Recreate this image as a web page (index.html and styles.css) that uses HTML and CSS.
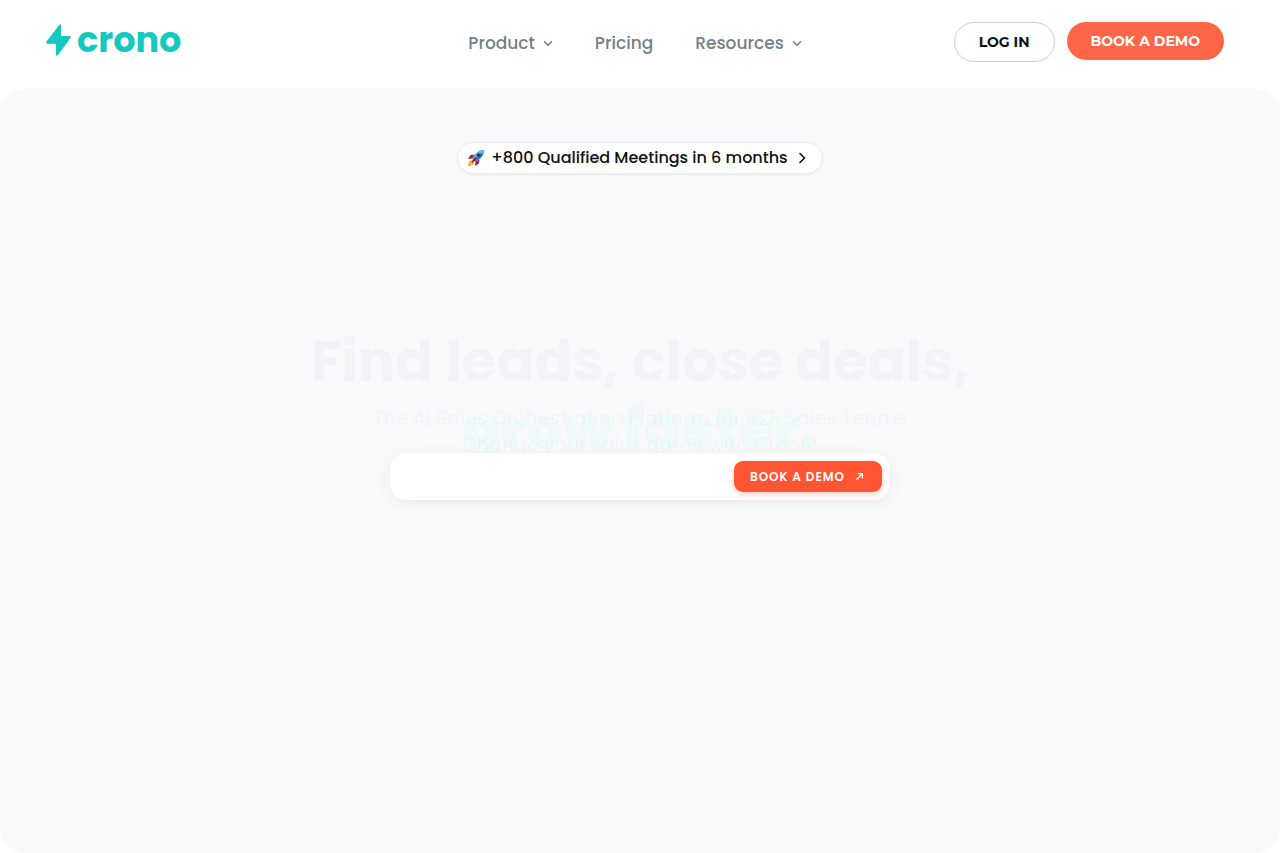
FILE: index.html
```html
<!DOCTYPE html>
<html lang="en">
<head>
    <meta charset="UTF-8">
    <meta name="viewport" content="width=device-width, initial-scale=1.0">
    <title>Crono</title>
    <link rel="stylesheet" href="styles.css">
</head>
<body>
    <header class="header">
        <a href="#" class="logo">
            <svg class="logo-bolt" viewBox="0 0 25 32" aria-hidden="true">
                <path d="M13 1.2Q14.6-.6 15 1.5V11Q15 12 16 12H23.5Q25.6 12.2 24.4 14L12.2 30.8Q10.4 32.7 9.9 30.4V20.8Q9.8 19.7 8.8 19.7H1.6Q-.7 19.4.5 17.5Z" fill="#13c8bf"/>
            </svg>
            <span>crono</span>
        </a>
        <nav class="nav">
            <button type="button" class="nav-item">Product
                <svg class="chevron" viewBox="0 0 10 10" aria-hidden="true"><path d="M1.5 3.7L5 7.2l3.5-3.5"/></svg>
            </button>
            <a href="#" class="nav-item">Pricing</a>
            <button type="button" class="nav-item">Resources
                <svg class="chevron" viewBox="0 0 10 10" aria-hidden="true"><path d="M1.5 3.7L5 7.2l3.5-3.5"/></svg>
            </button>
        </nav>
        <div class="actions">
            <a href="#" class="btn btn-outline">LOG IN</a>
            <a href="#" class="btn btn-primary">BOOK A DEMO</a>
        </div>
    </header>

    <main class="hero">
        <a href="#" class="badge">
            <svg class="rocket" viewBox="0 0 18 18" aria-hidden="true">
                <path d="M1 17c0-3 1-5 3-6l3.200 3.200C6 16.200 4 17 1 17z" fill="#fbb03b"/>
                <path d="M7.500 5.500L3.500 6 1 10l4.500-.5zM12.500 10.500L12 14.500 8 17l.5-4.500z" fill="#a3263e"/>
                <path d="M17.200.8C12.500.8 8.500 3.500 5 9.800L8.200 13c6.300-3.500 9-7.500 9-12.200z" fill="#4f9fe0"/>
                <path d="M17.200.8c0 4.700-2.700 8.700-9 12.200L6.600 11.400z" fill="#3279be"/>
                <path d="M17.200.8c-1.800 0-3.400.4-4.900 1.200l3.700 3.700c.8-1.500 1.200-3.100 1.200-4.900z" fill="#6fb7ee"/>
                <circle cx="11.700" cy="6.300" r="1.700" fill="#1d3557"/>
                <path d="M8.500 8.300l1.200 1.200-4.200 4.200-1.200-1.200z" fill="#8b1d3c"/>
            </svg>
            <span>+800 Qualified Meetings in 6 months</span>
            <svg class="badge-arrow" viewBox="0 0 12 12" aria-hidden="true"><path d="M4 1.500L8.500 6 4 10.500"/></svg>
        </a>

        <h1 class="title">Find leads, close deals,<br><span class="accent">grow faster.</span></h1>
        <p class="subtitle">The AI Sales Orchestration Platform for B2B Sales Teams<br>Change your sales game with Crono!</p>

        <form class="demo-form">
            <input type="email" class="demo-input" aria-label="Work email">
            <button type="submit" class="demo-button">BOOK A DEMO
                <svg class="demo-arrow" viewBox="0 0 10 10" aria-hidden="true"><path d="M1.500 8.500l6.500-6.500M3 1.800h5.200V7"/></svg>
            </button>
        </form>
    </main>
</body>
</html>
```
FILE: styles.css
```css
* {
    box-sizing: border-box;
}

body {
    margin: 0;
    font-family: Poppins, Inter, sans-serif;
    background-color: #fff;
    color: #111;
}

a {
    color: inherit;
    text-decoration: none;
}

button {
    border: none;
    background: none;
    padding: 0;
    font-family: inherit;
    cursor: pointer;
}

svg {
    flex: none;
}

/* Header */
.header {
    display: grid;
    grid-template-columns: 1fr auto 1fr;
    align-items: start;
    min-height: 89px;
    padding: 22px 56px 0 46px;
}

.logo {
    display: flex;
    align-items: center;
    gap: 6px;
    height: 36px;
    color: #13c8bf;
    font-size: 35px;
    font-weight: 700;
    line-height: 32px;
}

.logo-bolt {
    width: 25px;
    height: 32px;
}

.nav {
    display: flex;
    gap: 42px;
    padding-top: 8px;
}

.nav-item {
    display: flex;
    align-items: center;
    gap: 8px;
    color: #757f8a;
    font-size: 17px;
    font-weight: 500;
    line-height: 26px;
}

.chevron {
    width: 10px;
    height: 10px;
    fill: none;
    stroke: #757f8a;
    stroke-width: 1.6;
    stroke-linecap: round;
    stroke-linejoin: round;
}

.actions {
    display: flex;
    justify-content: flex-end;
    align-items: flex-start;
    gap: 12px;
}

.btn {
    padding: 0 24px;
    border-radius: 20px;
    font-family: Montserrat, Inter, sans-serif;
    font-size: 14px;
    font-weight: 700;
    line-height: 38px;
    white-space: nowrap;
}

.btn-outline {
    border: 1px solid #cbccd0;
    color: #04101f;
}

.btn-primary {
    background-color: #ff6547;
    color: #fff;
}

/* Hero */
.hero {
    display: flex;
    flex-direction: column;
    align-items: center;
    min-height: calc(100vh - 89px);
    padding: 53px 24px;
    border-radius: 24px;
    background-color: #f9fafc;
}

.badge {
    display: flex;
    align-items: center;
    height: 32px;
    padding: 0 14px 0 9px;
    border: 1px solid #eaecef;
    border-radius: 16px;
    background-color: #fff;
    box-shadow: 0 1px 2px rgba(0, 0, 0, 0.06);
    font-size: 16px;
    font-weight: 500;
    line-height: 24px;
}

.rocket {
    width: 18px;
    height: 18px;
    margin-right: 6px;
}

.badge-arrow {
    width: 12px;
    height: 12px;
    margin-left: 8px;
    fill: none;
    stroke: #111;
    stroke-width: 1.6;
    stroke-linecap: round;
    stroke-linejoin: round;
}

.title {
    margin: 154px 0 0;
    color: #f2f3f7;
    font-size: 56px;
    font-weight: 700;
    line-height: 67px;
    text-align: center;
}

.accent {
    color: #eff9fa;
    font-weight: 900;
}

/* The subtitle rises over the second title line */
.subtitle {
    margin: -56px 0 0;
    color: rgba(20, 40, 70, 0.03);
    font-size: 19px;
    font-weight: 500;
    line-height: 26px;
    text-align: center;
    z-index: 1;
}

.demo-form {
    display: flex;
    align-items: center;
    width: 100%;
    max-width: 500px;
    margin-top: -5px;
    padding: 8px;
    border-radius: 16px;
    background-color: #fff;
    box-shadow: 0 4px 16px rgba(0, 0, 0, 0.07);
    z-index: 2;
}

.demo-input {
    flex: 1;
    min-width: 0;
    height: 31px;
    padding: 0 12px;
    border: none;
    outline: none;
    background: none;
    font-family: inherit;
    font-size: 14px;
}

.demo-button {
    display: flex;
    align-items: center;
    gap: 10px;
    height: 31px;
    padding: 0 18px 0 16px;
    border-radius: 9px;
    background-color: #ff5533;
    box-shadow: 0 2px 6px rgba(255, 85, 51, 0.3);
    color: #fff;
    font-size: 12px;
    font-weight: 600;
    letter-spacing: 1px;
}

.demo-arrow {
    width: 9px;
    height: 9px;
    fill: none;
    stroke: #fff;
    stroke-width: 1.5;
}
```
